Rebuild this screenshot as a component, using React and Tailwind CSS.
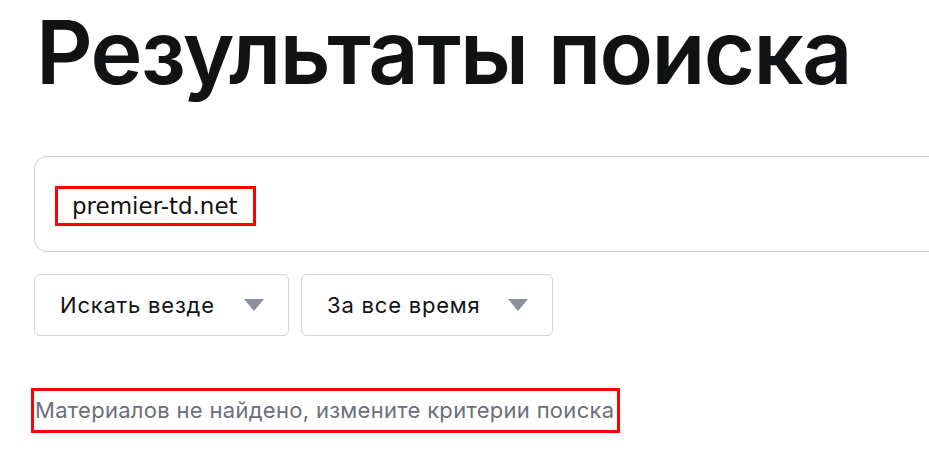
export default function App() {
  return (
    <div className="w-[929px] h-[454px] overflow-hidden bg-white font-['Inter',sans-serif]">
      <div className="pl-[34px] pt-[2px]">
        <h1 className="text-[88px] leading-[100px] font-semibold tracking-[-1.6px] text-[#111214] pl-[2px]">
          Результаты поиска
        </h1>

        <div className="mt-[54px] w-[1000px] h-[96px] border border-[#cfcfcf] rounded-[12px] flex items-center pl-[20px]">
          <div className="border-[3px] border-[#ff0000] h-[40px] w-[201px] flex items-center pl-[14px] mt-[4px]">
            <span className="font-['DejaVu_Sans',sans-serif] text-[23px] leading-none text-[#111]">premier-td.net</span>
          </div>
        </div>

        <div className="mt-[22px] flex gap-[12px]">
          <div className="w-[255px] h-[62px] border border-[#d4d4d4] rounded-[6px] flex items-center justify-between pl-[25px] pr-[24px]">
            <span className="text-[22px] tracking-[0.8px] text-[#111214]">Искать везде</span>
            <svg width="20" height="12" viewBox="0 0 20 12">
              <path d="M0 0h20L10 12z" fill="#8a8f99" />
            </svg>
          </div>
          <div className="w-[252px] h-[62px] border border-[#d4d4d4] rounded-[6px] flex items-center justify-between pl-[25px] pr-[24px]">
            <span className="text-[22px] tracking-[0.8px] text-[#111214]">За все время</span>
            <svg width="20" height="12" viewBox="0 0 20 12">
              <path d="M0 0h20L10 12z" fill="#8a8f99" />
            </svg>
          </div>
        </div>

        <div className="mt-[52px] -ml-[3px] w-[589px] h-[45px] border-[3px] border-[#ff0000] flex items-center pl-[1px]">
          <span className="text-[22px] tracking-[0.3px] text-[#6b6f7b] whitespace-nowrap">
            Материалов не найдено, измените критерии поиска
          </span>
        </div>
      </div>
    </div>
  );
}
